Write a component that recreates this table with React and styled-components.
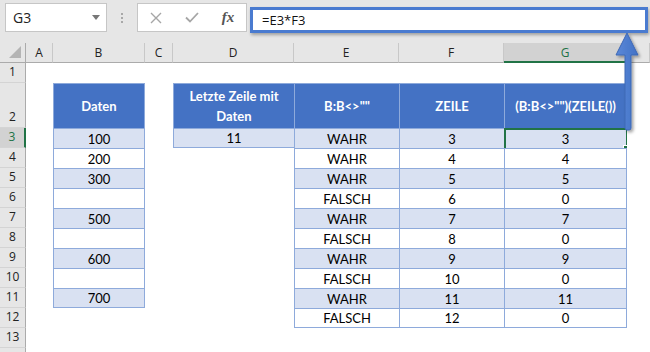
import React from 'react';
import styled, { createGlobalStyle } from 'styled-components';

const GlobalStyle = createGlobalStyle`
  html, body {
    margin: 0;
    padding: 0;
    background: #fff;
    overflow: hidden;
  }
`;

const Screen = styled.div`
  position: relative;
  width: 650px;
  height: 352px;
  overflow: hidden;
  background: #fff;
  font-family: "Open Sans", "Noto Sans", sans-serif;
`;

const Toolbar = styled.div`
  display: flex;
  align-items: flex-start;
  height: 43px;
  padding: 3px 0 0 5px;
  box-sizing: border-box;
  background: #e6e6e6;
`;

const NameBox = styled.div`
  display: flex;
  align-items: center;
  justify-content: space-between;
  width: 102px;
  height: 29px;
  padding: 0 6px 0 7px;
  box-sizing: border-box;
  background: #fff;
  border: 1px solid #c6c6c6;
  font-size: 14px;
  color: #222;
`;

const Caret = styled.span`
  width: 0;
  height: 0;
  border-left: 4px solid transparent;
  border-right: 4px solid transparent;
  border-top: 5px solid #777;
`;

const Grip = styled.div`
  display: flex;
  flex-direction: column;
  align-items: center;
  justify-content: center;
  gap: 2px;
  width: 30px;
  height: 29px;

  span {
    width: 2px;
    height: 2px;
    background: #a8a8a8;
  }
`;

const FuncBox = styled.div`
  display: flex;
  width: 110px;
  height: 29px;
  box-sizing: border-box;
  background: #fff;
  border: 1px solid #c6c6c6;
`;

const FuncSlot = styled.div`
  flex: 1;
  display: flex;
  align-items: center;
  justify-content: center;
  color: ${p => p.$dark ? '#555' : '#a6a6a6'};
  font-family: "Liberation Serif", "DejaVu Serif", serif;
  font-style: italic;
  font-weight: 700;
  font-size: 15px;
`;

const FormulaBox = styled.div`
  display: flex;
  align-items: center;
  width: 398px;
  height: 26px;
  margin: 4px 0 0 3px;
  padding-left: 9px;
  box-sizing: border-box;
  background: #fff;
  border: 3px solid #4a7bd0;
  box-shadow: 1px 2px 3px rgba(0, 0, 0, 0.3);
  font-size: 13px;
  color: #111;
`;

const Sheet = styled.div`
  display: grid;
  grid-template-columns: 26px 27px 92px 28px 121px 105px 105px 123px 1fr;
  grid-template-rows: 20px 20px 45px repeat(12, 20px);
`;

const Corner = styled.div`
  display: flex;
  align-items: flex-end;
  justify-content: flex-end;
  padding: 0 4px 4px 0;
  box-sizing: border-box;
  background: #e6e6e6;
  border-right: 1px solid #ababab;
  border-bottom: 1px solid #ababab;

  span {
    width: 0;
    height: 0;
    border-left: 12px solid transparent;
    border-bottom: 12px solid #b4b4b4;
  }
`;

const ColHead = styled.div`
  display: flex;
  align-items: center;
  justify-content: center;
  box-sizing: border-box;
  background: ${p => p.$active ? '#d2d2d2' : '#e6e6e6'};
  border-right: 1px solid #c8c8c8;
  border-bottom: ${p => p.$active ? '2px solid #217346' : '1px solid #ababab'};
  color: ${p => p.$active ? '#217346' : '#222'};
  font-size: 12px;
`;

const RowHead = styled.div`
  display: flex;
  align-items: flex-end;
  justify-content: center;
  padding-bottom: 1px;
  box-sizing: border-box;
  background: ${p => p.$active ? '#d2d2d2' : '#e6e6e6'};
  border-bottom: 1px solid #d4d4d4;
  border-right: ${p => p.$active ? '2px solid #217346' : '1px solid #ababab'};
  color: ${p => p.$active ? '#217346' : '#222'};
  font-size: 12px;
  line-height: 18px;
`;

const line = '1px solid #8eaadb';

const Cell = styled.div`
  position: relative;
  display: flex;
  align-items: center;
  justify-content: center;
  padding: 0 4px;
  box-sizing: border-box;
  font-family: Lato, "Liberation Sans", sans-serif;
  font-size: 13px;
  line-height: 20px;
  text-align: center;
  color: ${p => p.$kind === 'head' ? '#fff' : '#000'};
  font-weight: ${p => p.$kind === 'head' ? 700 : 400};
  background: ${p => p.$kind === 'head' ? '#4472c4' : p.$kind === 'band' ? '#d9e1f2' : '#fff'};
  border-left: ${p => p.$table ? line : 'none'};
  border-top: ${p => p.$table ? line : 'none'};
  border-right: ${p => p.$right ? line : 'none'};
  border-bottom: ${p => p.$bottom ? line : 'none'};
`;

const Selection = styled.span`
  position: absolute;
  top: -1px;
  left: -1px;
  right: -2px;
  bottom: -2px;
  border: 2px solid #217346;

  &::after {
    content: '';
    position: absolute;
    right: -4px;
    bottom: -4px;
    width: 5px;
    height: 5px;
    background: #217346;
    border: 1px solid #fff;
  }
`;

const Arrow = styled.svg`
  position: absolute;
  left: 605px;
  top: 28px;
  width: 40px;
  height: 108px;
  overflow: visible;
`;

const columns = ['A', 'B', 'C', 'D', 'E', 'F', 'G', 'H'];

const flags = ['WAHR', 'WAHR', 'WAHR', 'FALSCH', 'WAHR', 'FALSCH', 'WAHR', 'FALSCH', 'WAHR', 'FALSCH'];
const results = ['3', '4', '5', '0', '7', '0', '9', '0', '11', '0'];
const daten = { 3: '100', 4: '200', 5: '300', 7: '500', 9: '600', 11: '700' };

const isTable = (c, r) =>
  (c === 1 && r >= 2 && r <= 11) ||
  (c === 3 && r >= 2 && r <= 3) ||
  (c >= 4 && c <= 6 && r >= 2 && r <= 12);

const cellText = (c, r) => {
  if (r === 2) {
    return { 1: 'Daten', 3: 'Letzte Zeile mit Daten', 4: 'B:B<>""', 5: 'ZEILE', 6: '(B:B<>"")(ZEILE())' }[c];
  }
  if (c === 1) return daten[r] || '';
  if (c === 3 && r === 3) return '11';
  if (c === 4) return flags[r - 3];
  if (c === 5) return String(r);
  if (c === 6) return results[r - 3];
  return '';
};

const rows = Array.from({ length: 14 }, (_, i) => i + 1);

const App = () => (
  <Screen>
    <GlobalStyle />
    <Toolbar>
      <NameBox>
        G3
        <Caret />
      </NameBox>
      <Grip>
        <span />
        <span />
        <span />
      </Grip>
      <FuncBox>
        <FuncSlot>
          <svg width="12" height="12" viewBox="0 0 12 12">
            <path d="M1 1 L11 11 M11 1 L1 11" stroke="#a6a6a6" strokeWidth="1.4" fill="none" />
          </svg>
        </FuncSlot>
        <FuncSlot>
          <svg width="14" height="11" viewBox="0 0 14 11">
            <path d="M1 5.5 L5 9.5 L13 1" stroke="#a6a6a6" strokeWidth="1.8" fill="none" />
          </svg>
        </FuncSlot>
        <FuncSlot $dark>fx</FuncSlot>
      </FuncBox>
      <FormulaBox>=E3*F3</FormulaBox>
    </Toolbar>

    <Sheet>
      <Corner>
        <span />
      </Corner>
      {columns.map(col => (
        <ColHead key={col} $active={col === 'G'}>{col === 'H' ? '' : col}</ColHead>
      ))}

      {rows.map(r => (
        <React.Fragment key={r}>
          <RowHead $active={r === 3}>{r}</RowHead>
          {columns.map((col, c) => {
            const table = isTable(c, r);
            const kind = !table ? 'none' : r === 2 ? 'head' : r % 2 === 1 ? 'band' : 'plain';
            return (
              <Cell
                key={col}
                $kind={kind}
                $table={table}
                $right={table && !isTable(c + 1, r)}
                $bottom={table && !isTable(c, r + 1)}
              >
                {table ? cellText(c, r) : ''}
                {c === 6 && r === 3 && <Selection />}
              </Cell>
            );
          })}
        </React.Fragment>
      ))}
    </Sheet>

    <Arrow viewBox="0 0 40 108">
      <defs>
        <filter id="arrowShadow" x="-50%" y="-20%" width="200%" height="150%">
          <feDropShadow dx="2" dy="2" stdDeviation="1.5" floodColor="#000" floodOpacity="0.35" />
        </filter>
        <linearGradient id="arrowFill" x1="0" x2="1" y1="0" y2="0">
          <stop offset="0" stopColor="#5a88d8" />
          <stop offset="1" stopColor="#4272c6" />
        </linearGradient>
      </defs>
      <path
        d="M22 5 L33 27 L26 27 L26 100 Q26 102 24 102 L22 102 Q20 102 20 100 L20 27 L11 27 Z"
        fill="url(#arrowFill)"
        stroke="#3d68b5"
        strokeWidth="1"
        strokeLinejoin="round"
        filter="url(#arrowShadow)"
      />
    </Arrow>
  </Screen>
);

export default App;
